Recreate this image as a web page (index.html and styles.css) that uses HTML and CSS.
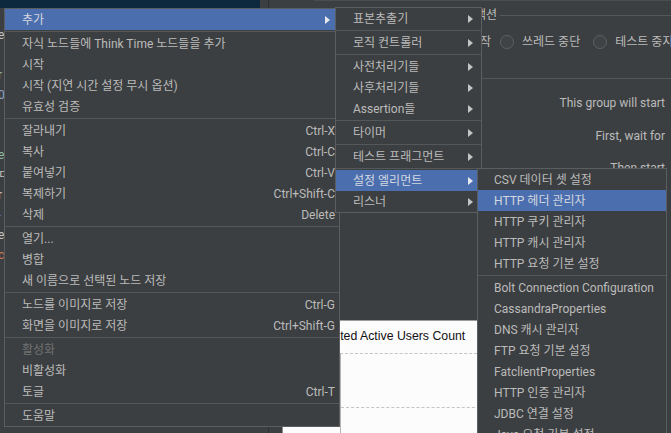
FILE: index.html
```html
<!DOCTYPE html>
<html lang="ko">
<head>
<meta charset="utf-8">
<title>JMeter</title>
<link rel="stylesheet" href="styles.css">
</head>
<body>
<div class="app">
  <aside class="tree">
    <div class="tree-top"><div class="tree-sel"></div><div class="tree-sb"></div></div>
    <div class="tree-rows">
      <div class="trow c1">e:</div>
      <div class="trow"></div>
      <div class="trow c2">r</div>
      <div class="trow c3">0</div>
      <div class="trow"></div>
      <div class="trow"></div>
      <div class="trow c2">e</div>
      <div class="trow c1">ㄷ</div>
      <div class="trow c1">r</div>
      <div class="trow c4">-</div>
      <div class="trow c1">e</div>
      <div class="trow c5">c</div>
    </div>
  </aside>
  <div class="splitter"></div>
  <main class="panel">
    <div class="panel-top"></div>
    <div class="fs-head">
      <div class="fs-title">샘플러 에러 후 취해질 액션</div>
      <div class="fs-line"></div>
    </div>
    <div class="radio-row">
      <div class="r-lead">다음 쓰레드 루프 시작</div>
      <span class="radio first"></span><span class="r-label">쓰레드 중단</span>
      <span class="radio"></span><span class="r-label">테스트 중지</span>
      <span class="radio"></span><span class="r-label">테스트 즉시 중지</span>
    </div>
    <div class="hr"></div>
    <div class="note n1">This group will start</div>
    <div class="note n2">First, wait for</div>
    <div class="note n3">Then start</div>
    <section class="chart">
      <div class="chart-title">Expected Active Users Count</div>
      <div class="plot">
        <div class="grid-row"></div>
      </div>
    </section>
  </main>
</div>

<div class="menu main-menu">
  <div class="item active"><span class="label">추가</span><span class="arrow"></span></div>
  <div class="sep"></div>
  <div class="item"><span class="label">자식 노드들에 Think Time 노드들을 추가</span></div>
  <div class="item"><span class="label">시작</span></div>
  <div class="item"><span class="label">시작 (지연 시간 설정 무시 옵션)</span></div>
  <div class="item"><span class="label">유효성 검증</span></div>
  <div class="sep"></div>
  <div class="item"><span class="label">잘라내기</span><span class="key">Ctrl-X</span></div>
  <div class="item"><span class="label">복사</span><span class="key">Ctrl-C</span></div>
  <div class="item"><span class="label">붙여넣기</span><span class="key">Ctrl-V</span></div>
  <div class="item"><span class="label">복제하기</span><span class="key">Ctrl+Shift-C</span></div>
  <div class="item"><span class="label">삭제</span><span class="key">Delete</span></div>
  <div class="sep"></div>
  <div class="item"><span class="label">열기...</span></div>
  <div class="item"><span class="label">병합</span></div>
  <div class="item"><span class="label">새 이름으로 선택된 노드 저장</span></div>
  <div class="sep"></div>
  <div class="item"><span class="label">노드를 이미지로 저장</span><span class="key">Ctrl-G</span></div>
  <div class="item"><span class="label">화면을 이미지로 저장</span><span class="key">Ctrl+Shift-G</span></div>
  <div class="sep"></div>
  <div class="item disabled"><span class="label">활성화</span></div>
  <div class="item"><span class="label">비활성화</span></div>
  <div class="item"><span class="label">토글</span><span class="key">Ctrl-T</span></div>
  <div class="sep"></div>
  <div class="item"><span class="label">도움말</span></div>
</div>

<div class="menu sub1">
  <div class="item"><span class="label">표본추출기</span><span class="arrow"></span></div>
  <div class="sep"></div>
  <div class="item"><span class="label">로직 컨트롤러</span><span class="arrow"></span></div>
  <div class="sep"></div>
  <div class="item"><span class="label">사전처리기들</span><span class="arrow"></span></div>
  <div class="item"><span class="label">사후처리기들</span><span class="arrow"></span></div>
  <div class="item"><span class="label">Assertion들</span><span class="arrow"></span></div>
  <div class="sep"></div>
  <div class="item"><span class="label">타이머</span><span class="arrow"></span></div>
  <div class="sep"></div>
  <div class="item"><span class="label">테스트 프래그먼트</span><span class="arrow"></span></div>
  <div class="sep"></div>
  <div class="item active"><span class="label">설정 엘리먼트</span><span class="arrow"></span></div>
  <div class="item"><span class="label">리스너</span><span class="arrow"></span></div>
</div>

<div class="menu sub2">
  <div class="item"><span class="label">CSV 데이터 셋 설정</span></div>
  <div class="item active"><span class="label">HTTP 헤더 관리자</span></div>
  <div class="item"><span class="label">HTTP 쿠키 관리자</span></div>
  <div class="item"><span class="label">HTTP 캐시 관리자</span></div>
  <div class="item"><span class="label">HTTP 요청 기본 설정</span></div>
  <div class="sep"></div>
  <div class="item"><span class="label">Bolt Connection Configuration</span></div>
  <div class="item"><span class="label">CassandraProperties</span></div>
  <div class="item"><span class="label">DNS 캐시 관리자</span></div>
  <div class="item"><span class="label">FTP 요청 기본 설정</span></div>
  <div class="item"><span class="label">FatclientProperties</span></div>
  <div class="item"><span class="label">HTTP 인증 관리자</span></div>
  <div class="item"><span class="label">JDBC 연결 설정</span></div>
  <div class="item"><span class="label">Java 요청 기본 설정</span></div>
</div>
</body>
</html>
```

FILE: styles.css
```css
html, body {
  margin: 0;
  padding: 0;
}
body {
  width: 671px;
  height: 433px;
  overflow: hidden;
  background: #3c3f41;
  font-family: Roboto, "Noto Sans CJK KR", sans-serif;
  font-size: 12px;
  color: #bbbbbb;
  position: relative;
}

.app {
  display: flex;
  height: 433px;
}

/* tree */
.tree {
  width: 268px;
  flex: none;
  display: flex;
  flex-direction: column;
  overflow: hidden;
}
.tree-top {
  display: flex;
  height: 8px;
}
.tree-sel {
  width: 260px;
  background: #0d293e;
}
.tree-sb {
  flex: 1;
  background: #3c3f41;
}
.tree-rows {
  padding-top: 17px;
}
.trow {
  height: 20px;
  line-height: 20px;
  margin-left: -2px;
  white-space: nowrap;
}
.c1 { color: #c4c4c4; }
.c2 { color: #8fbaa4; }
.c3 { color: #8ea6cc; }
.c4 { color: #4f74b8; }
.c5 { color: #c97a5c; }

.splitter {
  width: 1px;
  flex: none;
  background: #2d2f31;
}

/* right panel */
.panel {
  flex: 1;
  display: flex;
  flex-direction: column;
  min-width: 0;
  padding-left: 1px;
}
.panel-top {
  height: 0;
  margin-left: 44px;
  border-top: 1px solid #4a4d50;
}
.fs-head {
  display: flex;
  align-items: center;
  height: 14px;
  margin-top: 7px;
}
.fs-title {
  width: 227px;
  text-align: right;
  white-space: nowrap;
  line-height: 14px;
}
.fs-line {
  flex: 1;
  border-top: 1px solid #55585a;
  margin-left: 3px;
}
.radio-row {
  display: flex;
  align-items: center;
  height: 14px;
  margin-top: 13px;
  white-space: nowrap;
}
.r-lead {
  width: 221px;
  flex: none;
  text-align: right;
  line-height: 14px;
}
.radio {
  flex: none;
  width: 14px;
  height: 14px;
  border-radius: 50%;
  border: 1px solid #5e6163;
  background: #3f4345;
  margin-left: 13px;
  box-sizing: border-box;
}
.radio.first {
  margin-left: 9px;
}
.r-label {
  margin-left: 8px;
  line-height: 14px;
}
.hr {
  margin-top: 29px;
  border-top: 1px solid #55585a;
}
.note {
  height: 14px;
  line-height: 14px;
  text-align: right;
  padding-right: 6px;
  white-space: nowrap;
}
.n1 { margin-top: 17px; }
.n2 { margin-top: 19px; }
.n3 { margin-top: 18px; }

.chart {
  margin-top: 145px;
  margin-left: 12px;
  margin-right: 10px;
  flex: 1;
  background: #fcfcfd;
  border-top: 1px solid #9a9c9e;
  border-left: 1px solid #8c8e90;
  display: flex;
  flex-direction: column;
}
.chart-title {
  font-family: "Liberation Sans", Arial, sans-serif;
  font-size: 12.3px;
  color: #111111;
  height: 14px;
  line-height: 14px;
  margin-top: 8px;
  padding-left: 23px;
  white-space: nowrap;
}
.plot {
  margin-top: 10px;
  margin-left: 57px;
  flex: 1;
  border-top: 1px dashed #c4c4c4;
  border-left: 1px solid #b4b4b4;
}
.grid-row {
  height: 53px;
  border-bottom: 1px dashed #c4c4c4;
}

/* popup menus */
.menu {
  position: absolute;
  box-sizing: border-box;
  background: #3c3f41;
  border: 1px solid #5b5e60;
  color: #bbbbbb;
  font-family: Roboto, "Noto Sans CJK KR", sans-serif;
  font-size: 12px;
}
.main-menu {
  left: 4px;
  top: 8px;
  width: 336px;
}
.sub1 {
  left: 335px;
  top: 7px;
  width: 147px;
}
.sub2 {
  left: 477px;
  top: 168px;
  width: 190px;
}
.item {
  box-sizing: border-box;
  display: flex;
  align-items: center;
  height: 21px;
  line-height: 19px;
  padding: 2px 4px 0 17px;
  white-space: nowrap;
}
.sub2 .item {
  padding-left: 16px;
}
.item .label {
  flex: 1;
}
.item .key {
  padding-left: 20px;
}
.item .arrow {
  width: 0;
  height: 0;
  border-left: 5px solid #c4c4c4;
  border-top: 4px solid transparent;
  border-bottom: 4px solid transparent;
  margin-right: 5px;
  margin-top: -1px;
}
.sub1 .item .arrow {
  margin-right: 4px;
}
.item.active {
  background: #4b6eaf;
  color: #d4d8df;
}
.item.active .arrow {
  border-left-color: #e6e9ee;
}
.item.disabled {
  color: #707274;
}
.sep {
  height: 3px;
  display: flex;
  align-items: center;
}
.sep::before {
  content: "";
  flex: 1;
  height: 1px;
  background: #55585a;
}
```
